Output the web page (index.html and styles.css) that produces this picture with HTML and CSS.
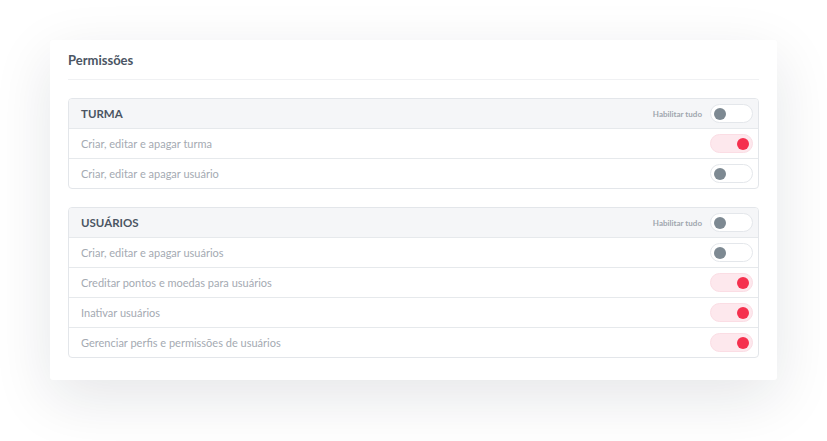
FILE: index.html
```html
<!DOCTYPE html>
<html>
<head>
    <title>Permissões</title>
    <link rel="stylesheet" href="styles.css">
</head>
<body>
    <div class="card">
        <h2 class="card-title">Permissões</h2>

        <div class="group">
            <div class="group-header">
                <span class="group-name">TURMA</span>
                <div class="enable-all">
                    <span>Habilitar tudo</span>
                    <span class="toggle"></span>
                </div>
            </div>
            <div class="row">
                <span>Criar, editar e apagar turma</span>
                <span class="toggle on"></span>
            </div>
            <div class="row">
                <span>Criar, editar e apagar usuário</span>
                <span class="toggle"></span>
            </div>
        </div>

        <div class="group">
            <div class="group-header">
                <span class="group-name">USUÁRIOS</span>
                <div class="enable-all">
                    <span>Habilitar tudo</span>
                    <span class="toggle"></span>
                </div>
            </div>
            <div class="row">
                <span>Criar, editar e apagar usuários</span>
                <span class="toggle"></span>
            </div>
            <div class="row">
                <span>Creditar pontos e moedas para usuários</span>
                <span class="toggle on"></span>
            </div>
            <div class="row">
                <span>Inativar usuários</span>
                <span class="toggle on"></span>
            </div>
            <div class="row">
                <span>Gerenciar perfis e permissões de usuários</span>
                <span class="toggle on"></span>
            </div>
        </div>
    </div>
</body>
</html>
```

FILE: styles.css
```css
body {
    font-family: Lato, "Open Sans", sans-serif;
    background-color: #fff;
    margin: 0;
    padding: 40px 50px 61px 50px;
}
.card {
    width: 727px;
    box-sizing: border-box;
    background-color: #fff;
    border-radius: 3px;
    padding: 11px 18px 22px 18px;
    box-shadow: 0 18px 60px rgba(20, 30, 50, 0.11);
}
.card-title {
    margin: 0;
    font-size: 13px;
    font-weight: 700;
    color: #4b5563;
    line-height: 18px;
    padding: 0 0 10px 0;
    border-bottom: 1px solid #f0f1f3;
}
.group {
    margin-top: 18px;
    border: 1px solid #e3e6ea;
    border-radius: 4px;
    overflow: hidden;
}
.group-header,
.row {
    display: flex;
    align-items: center;
    justify-content: space-between;
    height: 29px;
    padding: 0 5px 0 12px;
    border-top: 1px solid #e6e9ec;
}
.group-header {
    border-top: none;
    background-color: #f5f6f8;
}
.group-name {
    font-size: 11.5px;
    font-weight: 700;
    color: #4b5563;
}
.row span:first-child {
    font-size: 11px;
    color: #a4aab2;
}
.enable-all {
    display: flex;
    align-items: center;
    gap: 8px;
    font-size: 8px;
    font-weight: 700;
    color: #a0a6ae;
}
.toggle {
    position: relative;
    width: 41px;
    height: 17px;
    border: 1px solid #e4e7eb;
    border-radius: 10px;
    background-color: #fff;
}
.toggle::after {
    content: "";
    position: absolute;
    top: 2.5px;
    left: 3px;
    width: 12px;
    height: 12px;
    border-radius: 50%;
    background-color: #7d8992;
}
.toggle.on {
    background-color: #fde8ed;
    border-color: #fbdde4;
}
.toggle.on::after {
    left: auto;
    right: 3px;
    background-color: #f5304e;
}
```
